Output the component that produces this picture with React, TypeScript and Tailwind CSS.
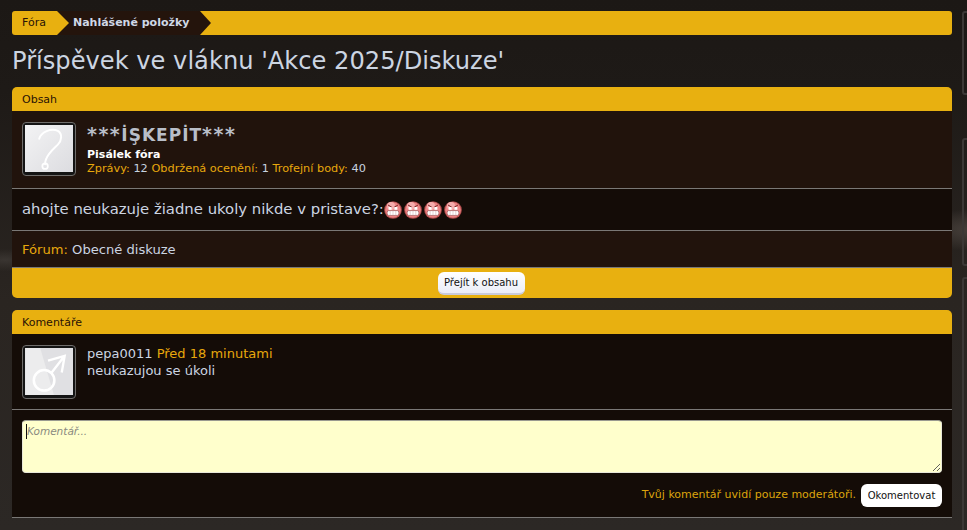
const font = { verdana: "font-['DejaVu_Sans',Verdana,sans-serif]" };

function QuestionAvatar() {
  return (
    <div className="h-[54px] w-[54px] shrink-0 rounded-[4px] border border-[#6f6d6b] bg-[#141414] p-[2px] pb-[3px]">
      <svg viewBox="0 0 48 48" className="h-full w-full bg-gradient-to-br from-[#f3f3f4] to-[#dcdce0]">
        <path d="M14 14c2-7 12-11 19-8 5 3 4 10 0 14-5 5-10 9-12 15-1 2-1 3-1 5" fill="none" stroke="#fff" strokeWidth="2" strokeLinecap="round" />
        <circle cx="20" cy="42" r="2.8" fill="none" stroke="#fff" strokeWidth="1.8" />
      </svg>
    </div>
  );
}

function MaleAvatar() {
  return (
    <div className="h-[54px] w-[54px] shrink-0 rounded-[4px] border border-[#6f6d6b] bg-[#141414] p-[2px] pb-[3px]">
      <svg viewBox="0 0 48 48" className="h-full w-full bg-[#e0e0e3]">
        <path d="M0 0h15l14 48H0z" fill="#ececed" />
        <circle cx="19" cy="33" r="10.5" fill="none" stroke="#fff" strokeWidth="2.6" />
        <path d="M26 26 40 8M23 13l17-5-3 17" fill="none" stroke="#fff" strokeWidth="2.4" />
      </svg>
    </div>
  );
}

function AngryFace() {
  return (
    <svg viewBox="0 0 18 18" className="h-[18px] w-[18px]">
      <circle cx="9" cy="9" r="8.8" fill="#b04c4c" />
      <circle cx="9" cy="9" r="7.8" fill="#ee8585" />
      <circle cx="7" cy="5" r="4" fill="#f6adad" />
      <path d="M4 4 7.8 6.2M14 4 10.2 6.2" stroke="#7a2a2a" strokeWidth="1" />
      <rect x="4.6" y="6" width="3" height="2.8" fill="#fff" />
      <rect x="10.4" y="6" width="3" height="2.8" fill="#fff" />
      <rect x="3.2" y="9.6" width="11.6" height="4.8" rx="1.6" fill="#fff" stroke="#7a2a2a" strokeWidth="0.5" />
      <path d="M6.2 9.8v4.4M9 9.8v4.4M11.8 9.8v4.4" stroke="#c9a5a5" strokeWidth="0.5" />
    </svg>
  );
}

function Header({ children }: { children: React.ReactNode }) {
  return (
    <div className="h-6 rounded-t-[5px] bg-[#e8b010] pl-[10px] text-[11px] leading-[25px] text-[#2a1306]">
      {children}
    </div>
  );
}

export default function App() {
  return (
    <div className={`${font.verdana} relative h-[530px] w-[967px] overflow-hidden bg-[#1e1916] bg-[radial-gradient(ellipse_at_980px_230px,#4a433e_0,transparent_70px),radial-gradient(ellipse_at_5px_260px,#3a3531_0,transparent_40px),linear-gradient(to_bottom,#1c1815_0,#1e1a17_90px,#2a2521_300px,#2c2825_530px)]`}>
      <div className="flex items-start gap-[10px] pl-3 pt-[11px]">
        <main className="w-[940px] shrink-0">
          <nav className="flex h-6 items-center overflow-hidden rounded-[3px] bg-[#e8b010] text-[11px]">
            <span className="flex h-6 items-center pl-[10px] pr-[11px] text-[#2a1306]">Fóra</span>
            <svg viewBox="0 0 12 24" className="h-6 w-3 shrink-0 bg-[#24140c]">
              <path d="M0 0l12 12L0 24z" fill="#e8b010" />
            </svg>
            <span className="flex h-6 items-center bg-[#24140c] pl-[4px] pr-[11px] font-bold text-[#d0d8e6]">Nahlášené položky</span>
            <svg viewBox="0 0 11 24" className="h-6 w-[11px] shrink-0">
              <path d="M0 0l11 12L0 24z" fill="#24140c" />
            </svg>
          </nav>

          <h1 className="mb-[10px] mt-[11px] h-[31px] text-[24.15px] leading-[31px] text-[#ccd5e2]">
            Příspěvek ve vláknu 'Akce 2025/Diskuze'
          </h1>

          <section className="overflow-hidden rounded-b-[5px]">
            <Header>Obsah</Header>
            <div className="flex h-[78px] gap-[11px] border-b border-[#7a7876] bg-[#21130c] px-[10px] pt-[11px]">
              <QuestionAvatar />
              <div>
                <div className="h-[25px] text-[17px] font-bold leading-[24px] tracking-[1px] text-[#b9bec8]">
                  <span className="text-[19px] tracking-[1.5px]">***</span>İŞKEPİT<span className="text-[19px] tracking-[1.5px]">***</span>
                </div>
                <div className="mt-[1px] text-[11px] font-bold leading-[14px] text-white">Pisálek fóra</div>
                <div className="text-[11.3px] leading-[14px] text-[#e8a80c]">
                  Zprávy: <span className="text-[#c8d3e0]">12</span> Obdržená ocenění: <span className="text-[#c8d3e0]">1</span> Trofejní body: <span className="text-[#c8d3e0]">40</span>
                </div>
              </div>
            </div>
            <div className="flex h-[42px] items-center border-b border-[#7a7876] bg-[#140c07] pl-[10px] text-[14.85px] text-[#ccd5e2]">
              ahojte neukazuje žiadne ukoly nikde v pristave?:
              <span className="flex gap-[2px]">
                <AngryFace />
                <AngryFace />
                <AngryFace />
                <AngryFace />
              </span>
            </div>
            <div className="h-[37px] border-b border-[#7a7876] bg-[#21130c] pl-[10px] text-[13.1px] leading-[37px] text-[#ccd5e2]">
              <span className="text-[#e8a80c]">Fórum:</span> Obecné diskuze
            </div>
            <div className="flex h-[30px] justify-center bg-[#e8b010] pt-[4px]">
              <button className="h-[23px] w-[87px] -translate-x-px rounded-[6px] border-b-2 border-[#c9cbdc] bg-gradient-to-b from-white to-[#ebedf7] text-[10px] leading-[22px] text-[#111]">
                Přejít k obsahu
              </button>
            </div>
          </section>

          <section className="mt-3 overflow-hidden">
            <Header>Komentáře</Header>
            <div className="flex h-[76px] gap-[11px] border-b border-[#7a7876] bg-[#140c07] px-[10px] pt-[11px]">
              <MaleAvatar />
              <div className="text-[13px] leading-[17px] text-[#ccd5e2]">
                <div>pepa0011 <span className="text-[#e8a80c]">Před 18 minutami</span></div>
                <div>neukazujou se úkoli</div>
              </div>
            </div>
            <form className="flex h-[108px] flex-col border-b border-[#7a7876] bg-[#140c07] px-[10px] pt-[10px]">
              <div className="relative h-[53px]">
                <textarea
                  placeholder="Komentář..."
                  className="h-[53px] w-full rounded-[4px] border border-[#e8e8d8] border-t-[#9a9a90] bg-[#ffffcc] pl-[4px] pt-[3px] text-[10.5px] italic text-[#222] outline-none placeholder:text-[#8a8a80]"
                />
                <span className="absolute left-[4px] top-[4px] h-[15px] w-px bg-[#111]" />
              </div>
              <div className="mt-[11px] flex items-center justify-end gap-[5px]">
                <span className="text-[11px] text-[#dca40c]">Tvůj komentář uvidí pouze moderátoři.</span>
                <button type="button" className="h-[23px] w-[81px] rounded-[6px] bg-white text-[10px] text-[#111]">
                  Okomentovat
                </button>
              </div>
            </form>
          </section>
        </main>

        <aside className="flex w-[40px] shrink-0 flex-col gap-[11px]">
          <div className="h-[84px] rounded-[3px] border-2 border-[#3c3836]" />
          <div className="mt-[32px] h-[128px] rounded-[3px] border-2 border-[#3c3836]" />
          <div className="h-[260px] rounded-[3px] border-2 border-[#3c3836]" />
        </aside>
      </div>
    </div>
  );
}
